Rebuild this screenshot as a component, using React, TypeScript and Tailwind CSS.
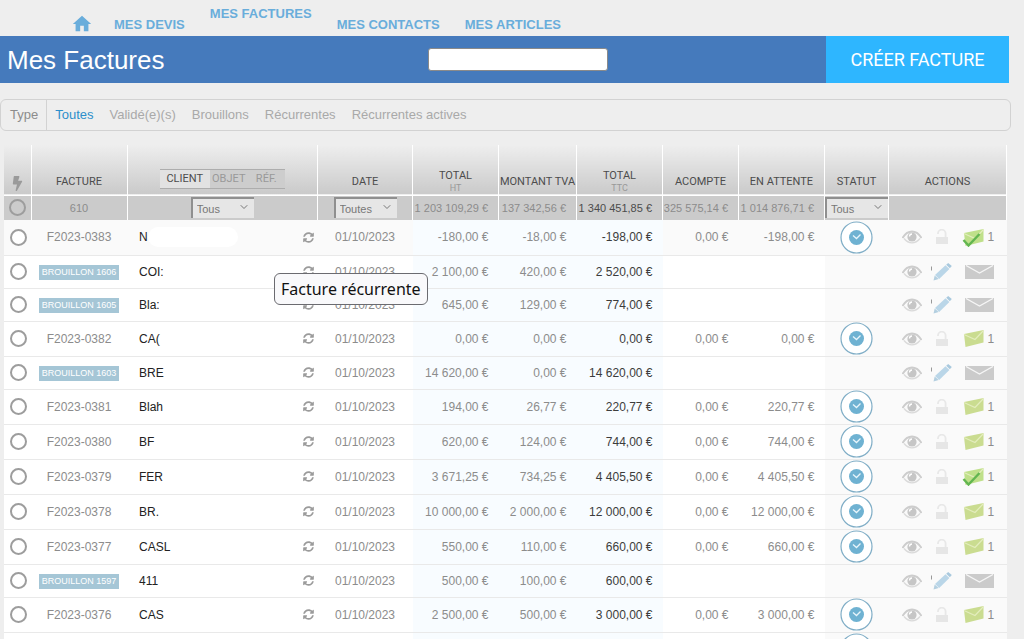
import { useState } from "react";
import clsx from "clsx";
import { FaBolt, FaSyncAlt } from "react-icons/fa";
import { MdHome } from "react-icons/md";
import { ChevronDown } from "lucide-react";

type Invoice = {
    id: string;
    draft?: boolean;
    client: string;
    ht: string;
    tva: string;
    ttc: string;
    acompte?: string;
    attente?: string;
    sent?: boolean;
    tooltip?: string;
};

const invoices: Invoice[] = [
    { id: "F2023-0383", client: "N", ht: "-180,00 €", tva: "-18,00 €", ttc: "-198,00 €", acompte: "0,00 €", attente: "-198,00 €", sent: true },
    { id: "BROUILLON 1606", draft: true, client: "COI:", ht: "2 100,00 €", tva: "420,00 €", ttc: "2 520,00 €", tooltip: "Facture récurrente" },
    { id: "BROUILLON 1605", draft: true, client: "Bla:", ht: "645,00 €", tva: "129,00 €", ttc: "774,00 €" },
    { id: "F2023-0382", client: "CA(", ht: "0,00 €", tva: "0,00 €", ttc: "0,00 €", acompte: "0,00 €", attente: "0,00 €" },
    { id: "BROUILLON 1603", draft: true, client: "BRE", ht: "14 620,00 €", tva: "0,00 €", ttc: "14 620,00 €" },
    { id: "F2023-0381", client: "Blah", ht: "194,00 €", tva: "26,77 €", ttc: "220,77 €", acompte: "0,00 €", attente: "220,77 €" },
    { id: "F2023-0380", client: "BF", ht: "620,00 €", tva: "124,00 €", ttc: "744,00 €", acompte: "0,00 €", attente: "744,00 €" },
    { id: "F2023-0379", client: "FER", ht: "3 671,25 €", tva: "734,25 €", ttc: "4 405,50 €", acompte: "0,00 €", attente: "4 405,50 €", sent: true },
    { id: "F2023-0378", client: "BR.", ht: "10 000,00 €", tva: "2 000,00 €", ttc: "12 000,00 €", acompte: "0,00 €", attente: "12 000,00 €" },
    { id: "F2023-0377", client: "CASL", ht: "550,00 €", tva: "110,00 €", ttc: "660,00 €", acompte: "0,00 €", attente: "660,00 €" },
    { id: "BROUILLON 1597", draft: true, client: "411", ht: "500,00 €", tva: "100,00 €", ttc: "600,00 €" },
    { id: "F2023-0376", client: "CAS", ht: "2 500,00 €", tva: "500,00 €", ttc: "3 000,00 €", acompte: "0,00 €", attente: "3 000,00 €" },
    { id: "", client: "", ht: "", tva: "", ttc: "" },
];

const filters = ["Toutes", "Validé(e)(s)", "Brouillons", "Récurrentes", "Récurrentes actives"];

function EyeIcon() {
    return (
        <svg width="20" height="14" viewBox="0 0 20 14" fill="none">
            <path d="M.5 8C3.500 3 7 1.500 10 1.500S16.500 3 19.500 8" stroke="#cdcdcd" strokeWidth="1.800" />
            <path d="M2 8.500C4.500 11.500 7 12.800 10 12.800S15.500 11.500 18 8.500" stroke="#dadada" strokeWidth="1.300" />
            <circle cx="10" cy="7" r="4.600" fill="#c6c6c6" />
            <path d="M7.500 6.500A2.600 2.600 0 0 1 10 4" stroke="#fff" strokeWidth="1.300" />
        </svg>
    );
}

function LockIcon() {
    return (
        <svg width="14" height="16" viewBox="0 0 14 16" fill="none">
            <path d="M3 5V4.500a3.800 3.800 0 0 1 7.600 0V8" stroke="#e8e8e8" strokeWidth="1.800" />
            <path d="M1 8h12v7H1z" fill="#e6e6e6" />
        </svg>
    );
}

function PencilIcon() {
    return (
        <svg width="21" height="18" viewBox="0 0 21 18">
            <path d="M.5 3.500v4" stroke="#999" strokeWidth="1" />
            <path d="M2.500 17.500l1.200-5 4 3.500z" fill="#b3cfe0" />
            <path d="M4 12L14.500 2.200l3.900 3.700-10.200 10z" fill="#bad6e8" />
            <path d="M15.200 1.700L17.200 0l3.600 3.100-2 2.200z" fill="#a9c9de" />
        </svg>
    );
}

function EnvelopeIcon() {
    return (
        <svg width="29" height="14" viewBox="0 0 29 14" fill="none">
            <path d="M0 0h29v14H0z" fill="#cbcbcb" />
            <path d="M1 .5l13.500 7.500L28 .5" stroke="#f6f6f6" strokeWidth="1.300" />
        </svg>
    );
}

function SentIcon({ checked }: { checked?: boolean }) {
    return (
        <svg width="23" height="19" viewBox="0 0 23 19" fill="none">
            <path d="M2 5L21.500 1v12.500L3.500 18z" fill={checked ? "#bfe08a" : "#cadc90"} />
            <path d="M2 5.500l11 5L21.500 1.500" stroke="#e3edbd" strokeWidth="1.200" />
            {checked && <path d="M1.500 12l5 5.500L17.500 6" stroke="#62b650" strokeWidth="2.400" />}
        </svg>
    );
}

function StatusIcon() {
    return (
        <svg width="33" height="33" viewBox="0 0 33 33" fill="none" className="mx-auto">
            <circle cx="16.500" cy="16.500" r="15.500" fill="#fff" stroke="#7fadc6" strokeWidth="1.200" />
            <circle cx="16.500" cy="16.500" r="7.500" fill="#6fb2d2" />
            <path d="M13 14.500l3.500 3 4-4" stroke="#e8f5fb" strokeWidth="1.300" />
        </svg>
    );
}

function FilterSelect({ label, value }: { label: string; value: string }) {
    return (
        <div className="relative inline-block w-[63px] max-w-full align-middle">
            <select aria-label={label} className="block h-[21px] w-full appearance-none border-t-2 border-l-2 border-[#8f8f8f] bg-[#e6e6e6] pl-1 text-[11px] leading-4 text-[#777] outline-none">
                <option>{value}</option>
            </select>
            <ChevronDown size={12} className="pointer-events-none absolute top-1 right-1 text-[#777]" />
        </div>
    );
}

function InvoiceRow({ invoice, first }: { invoice: Invoice; first: boolean }) {
    const amount = "pr-[10px] text-right";
    const total = clsx(amount, "bg-[#f8fcff]");

    return (
        <tr className={clsx("border-b border-[#e9e9e9]", invoice.draft ? "h-[33px]" : "h-[35px]", first ? "bg-[#fafafa]" : "bg-white")}>
            <td className="pl-[6px]">
                {invoice.id && <input type="radio" name="invoice" aria-label={invoice.id} className="block size-[17px] appearance-none rounded-full border-2 border-[#9d9d9d] bg-white" />}
            </td>
            <td className="text-center">
                {invoice.draft ? (
                    <span className="inline-block bg-[#a5c6d6] px-[3px] text-[9px] leading-[15px] text-white">{invoice.id}</span>
                ) : (
                    invoice.id
                )}
            </td>
            <td className="relative pr-1 pl-3">
                <div className="flex items-center">
                    <span className="text-[#222]">{invoice.client}</span>
                    {first && <span className="h-5 w-[90px] rounded-full bg-white" />}
                    {invoice.id && <FaSyncAlt size={11} className="ml-auto text-[#9b9b9b]" />}
                </div>
                {invoice.tooltip && (
                    <div role="tooltip" className="absolute top-[17px] left-[147px] z-10 rounded-md border border-[#6b6b70] bg-[#f9f9fb] px-[6px] py-[3px] font-['Noto_Sans',sans-serif] text-[16px] leading-6 text-[#111]">
                        {invoice.tooltip}
                    </div>
                )}
            </td>
            <td className="text-center">{invoice.id && "01/10/2023"}</td>
            <td className={total}>{invoice.ht}</td>
            <td className={total}>{invoice.tva}</td>
            <td className={clsx(total, "text-[#3c3c3c]")}>{invoice.ttc}</td>
            <td className={amount}>{invoice.acompte}</td>
            <td className={amount}>{invoice.attente}</td>
            <td className="bg-[#fafafa]">{!invoice.draft && <StatusIcon />}</td>
            <td className="bg-[#fafafa]">
                {invoice.id && (
                    <div className="flex items-center pl-[13px]">
                        <button aria-label="Voir"><EyeIcon /></button>
                        <button aria-label={invoice.draft ? "Modifier" : "Verrou"} className="ml-2 flex w-6 justify-center">
                            {invoice.draft ? <PencilIcon /> : <LockIcon />}
                        </button>
                        <button aria-label="Envoyer" className={clsx("flex items-center gap-[3px]", invoice.draft ? "ml-[11px]" : "ml-2")}>
                            {invoice.draft ? <EnvelopeIcon /> : <><SentIcon checked={invoice.sent} /><span>1</span></>}
                        </button>
                    </div>
                )}
            </td>
        </tr>
    );
}

export default function App() {
    const [activeFilter, setActiveFilter] = useState("Toutes");
    const head = "border-r border-white pb-[6px] align-bottom font-normal";
    const sum = "border-r border-white pr-[10px] text-right";

    return (
        <div className="h-screen overflow-hidden bg-[#eeeeee] font-['Liberation_Sans',Arial,sans-serif] text-[12px] leading-4 text-[#8c8c8c]">
            <nav className="flex h-9 items-start gap-[25px] pl-[71px] text-[13px] font-bold text-[#69addb]">
                <a href="#" aria-label="Accueil" className="-mr-1 pt-[13px]"><MdHome size={22} /></a>
                <a href="#devis" className="pt-[17px]">MES DEVIS</a>
                <a href="#factures" className="pt-[6px]">MES FACTURES</a>
                <a href="#contacts" className="pt-[17px]">MES CONTACTS</a>
                <a href="#articles" className="pt-[17px]">MES ARTICLES</a>
            </nav>

            <header className="mr-[15px] grid h-[47px] grid-cols-[428fr_398fr_183px] items-center bg-[#457abc]">
                <h1 className="pl-[7px] text-[26px] leading-8 text-white">Mes Factures</h1>
                <input type="search" aria-label="Rechercher" className="h-[23px] w-[180px] rounded-[3px] border border-[#8a8a8a] bg-white px-2" />
                <button className="h-full bg-[#2eb6ff] font-[Roboto,sans-serif] text-[18px] text-white">CRÉER FACTURE</button>
            </header>

            <section className="mt-4 mr-[13px] flex h-8 items-stretch rounded-md border border-[#d2d2d2] text-[13px]">
                <span className="flex items-center border-r border-[#d2d2d2] pr-2 pl-[9px]">Type</span>
                <div className="flex items-center gap-4 pl-2">
                    {filters.map((filter) => (
                        <button key={filter} onClick={() => setActiveFilter(filter)} className={filter === activeFilter ? "text-[#2d8fcb]" : "text-[#a9a9a9]"}>
                            {filter}
                        </button>
                    ))}
                </div>
            </section>

            <main className="mt-[14px] mr-[17px] ml-1">
                <table className="w-full table-fixed border-collapse whitespace-nowrap">
                    <colgroup>
                        <col className="w-[27px]" />
                        <col className="w-[96px]" />
                        <col />
                        <col className="w-[95px]" />
                        <col className="w-[86px]" />
                        <col className="w-[78px]" />
                        <col className="w-[86px]" />
                        <col className="w-[76px]" />
                        <col className="w-[86px]" />
                        <col className="w-[64px]" />
                        <col className="w-[118px]" />
                    </colgroup>
                    <thead>
                        <tr className="h-[50px] border-b border-white bg-linear-to-b from-[#eeeeee] to-[#cacaca] font-[Roboto,sans-serif] text-[11px] leading-[14px] text-[#4c4c4c]">
                            <th className="border-r border-white pb-1 align-bottom"><FaBolt size={15} className="mx-auto text-[#9a9a9a]" aria-label="Sélection" /></th>
                            <th className={head}>FACTURE</th>
                            <th className={head}>
                                <div className="mx-auto flex h-5 w-[125px] border-y border-[#adadad] bg-[#cdcdcd] text-[#999]">
                                    <button className="w-[50px] bg-[#e2e2e2] text-[#4c4c4c]">CLIENT</button>
                                    <button className="w-[38px]">OBJET</button>
                                    <button className="w-[37px]">RÉF.</button>
                                </div>
                            </th>
                            <th className={head}>DATE</th>
                            <th className={clsx(head, "leading-[13px]")}>TOTAL<div className="-mb-[6px] text-[9px] text-[#999]">HT</div></th>
                            <th className={head}>MONTANT TVA</th>
                            <th className={clsx(head, "leading-[13px]")}>TOTAL<div className="-mb-[6px] text-[9px] text-[#999]">TTC</div></th>
                            <th className={head}>ACOMPTE</th>
                            <th className={head}>EN ATTENTE</th>
                            <th className={head}>STATUT</th>
                            <th className={head}>ACTIONS</th>
                        </tr>
                        <tr className="h-[25px] bg-[#cbcbcb] text-[11px]">
                            <td className="border-r border-white pl-[5px]">
                                <input type="radio" name="all" aria-label="Tout sélectionner" className="block size-[17px] appearance-none rounded-full border-2 border-[#9d9d9d]" />
                            </td>
                            <td className="border-r border-white text-center">610</td>
                            <td className="border-r border-white text-center"><FilterSelect label="Client" value="Tous" /></td>
                            <td className="border-r border-white text-center"><FilterSelect label="Date" value="Toutes" /></td>
                            <td className={sum}>1 203 109,29 €</td>
                            <td className={sum}>137 342,56 €</td>
                            <td className={clsx(sum, "text-[#4c4c4c]")}>1 340 451,85 €</td>
                            <td className={sum}>325 575,14 €</td>
                            <td className={sum}>1 014 876,71 €</td>
                            <td className="border-r border-white"><FilterSelect label="Statut" value="Tous" /></td>
                            <td className="border-r border-white"></td>
                        </tr>
                    </thead>
                    <tbody>
                        {invoices.map((invoice, index) => (
                            <InvoiceRow key={index} invoice={invoice} first={index === 0} />
                        ))}
                    </tbody>
                </table>
            </main>
        </div>
    );
}
